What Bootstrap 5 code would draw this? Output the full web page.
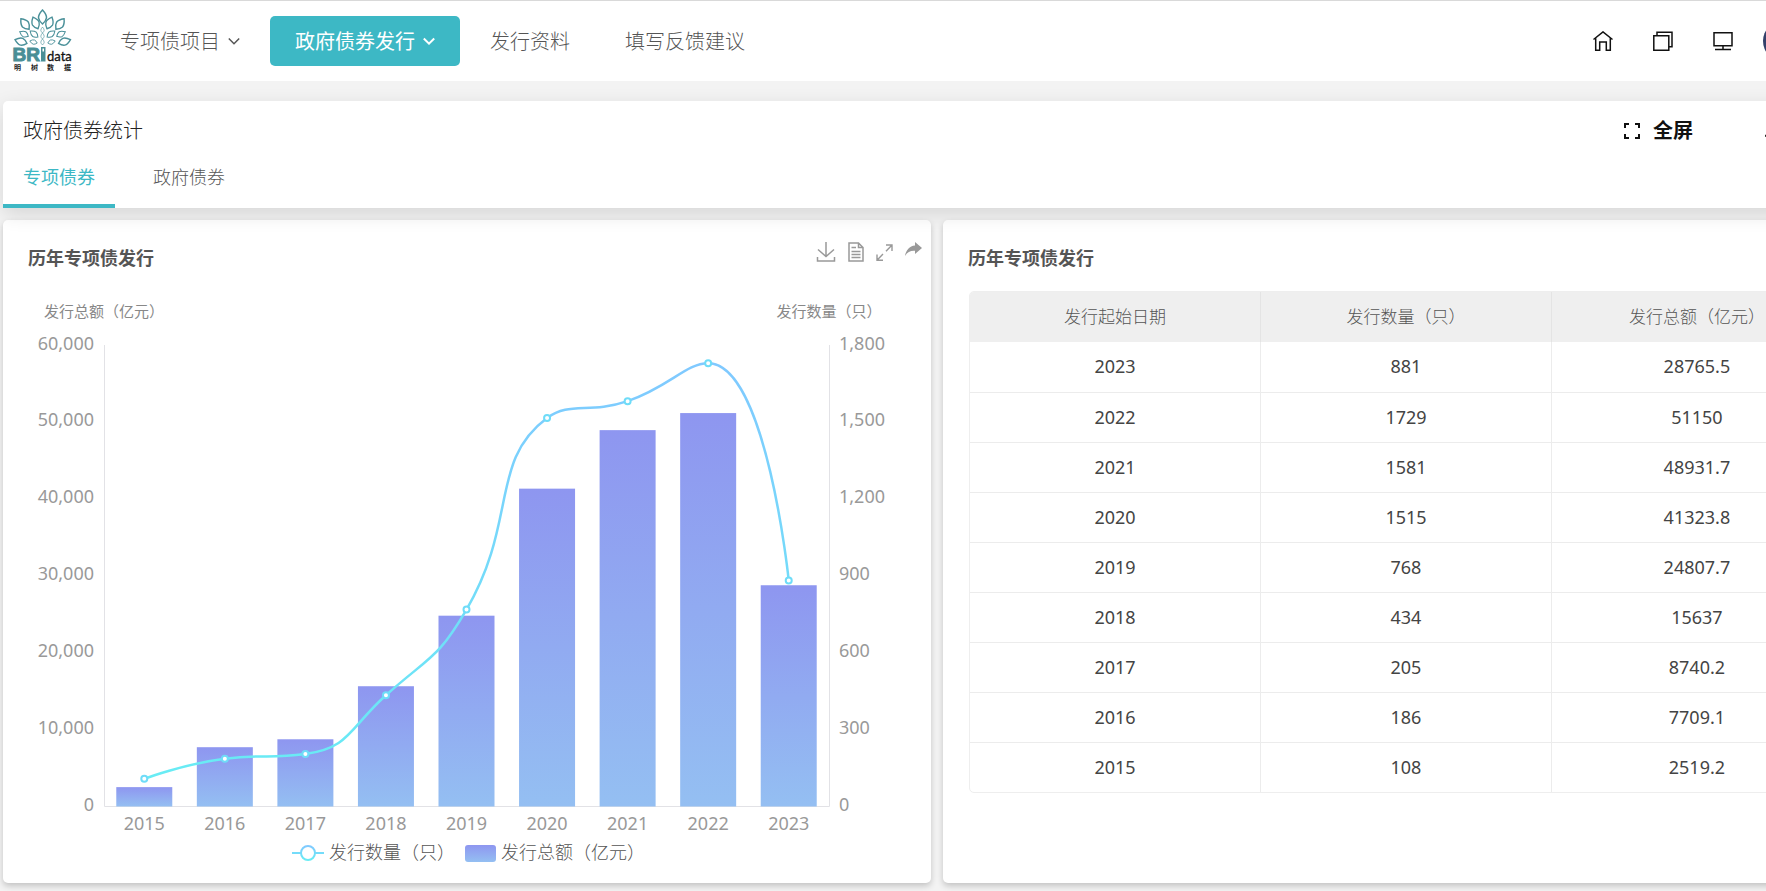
<!DOCTYPE html>
<html lang="zh-CN">
<head>
<meta charset="utf-8">
<meta name="viewport" content="width=device-width, initial-scale=1">
<title>政府债券统计</title>
<link href="https://cdn.jsdelivr.net/npm/bootstrap@5.3.0/dist/css/bootstrap.min.css" rel="stylesheet">
<style>
:root { --teal: #3db8c5; --bleed: 108px; }
body { font-family: "Noto Sans", "Noto Sans CJK SC", sans-serif; font-size: 18px; line-height: 24px; background: #f3f3f3; color: #555; overflow-x: hidden; }
/* the dashboard runs past the right edge of the window */
.shell { width: calc(100% + var(--bleed)); overflow: hidden; min-height: 100vh; }
.topbar { border-top: 1px solid #d9d9d9; height: 81px; padding: 0 71px 0 12px; background: #fff; font-size: 20px; }
.brand-mark { width: 83px; }
.topbar .nav { gap: 5px; }
.topbar .nav-link { font-family: "Noto Sans CJK SC", sans-serif; font-weight: 300; color: #555; height: 50px; padding: 0 25px; border-radius: 5px; gap: 8px; }
.topbar .nav-link.active { background: var(--teal); color: #fff; font-weight: 400; }
.tools { gap: 40px; }
.icon-btn { border: 0; background: none; padding: 0; line-height: 0; color: #111; }
.avatar { width: 40px; height: 40px; border-radius: 50%; background: #33406a; margin-left: -10px; }
.page { padding: 20px 3px 8px; }
.panel { background: #fff; border-radius: 5px; box-shadow: 0 6px 20px rgba(0,0,0,.12); position: relative; z-index: 1; }
.panel-head { height: 55px; padding: 4px 86px 0 20px; color: #222; }
.panel-head h1 { font-size: 20px; font-weight: 300; line-height: 28px; margin: 0; }
.full-btn { font-size: 20px; font-weight: 700; color: #111; gap: 13px; margin-right: 72px; line-height: 28px; }
.tab-row { gap: 18px; height: 52px; }
.tab-row .nav-link { font-weight: 300; color: #555; padding: 9px 20px 0; border-bottom: 4px solid transparent; border-radius: 0; }
.tab-row .nav-link.active { color: var(--teal); border-color: var(--teal); font-weight: 400; }
.boards { margin-top: 12px; gap: 12px; }
.board { flex: 1 1 0; min-width: 0; min-height: 663px; background: #fff; border-radius: 5px; box-shadow: 0 3px 6px rgba(0,0,0,.2); }
.board-head { height: 70px; padding: 0 9px 0 25px; }
.board-head h2 { font-size: 18px; line-height: 24px; font-weight: 700; color: #555; margin: 26px 0 0; }
.board-tools { gap: 12px; padding-top: 22px; }
.board-tools .icon-btn { color: #999; }
.chart { display: block; width: 100%; height: auto; font-size: 18px; fill: #999; }
.chart .axis-name { font-size: 15px; fill: #888; }
.chart .legend-text { fill: #555; font-weight: 300; }
.grid-wrap { margin: 1px 28px 0 26px; border: 1px solid #eee; border-radius: 5px; overflow: hidden; }
.grid-wrap table { margin: 0; table-layout: fixed; text-align: center; --bs-table-color: #444; --bs-table-bg: transparent; border-color: #eee; }
.grid-wrap th, .grid-wrap td { height: 50px; padding: 0 0 1px; vertical-align: middle; border: 0 solid #ececec; }
.grid-wrap th { background: #efefef !important; font-size: 17px; font-weight: 300; color: #555 !important; border-color: #e4e4e4; }
.grid-wrap th + th, .grid-wrap td + td { border-left-width: 1px; }
.grid-wrap tbody tr + tr td { border-top-width: 1px; }
</style>
</head>
<body>
<div class="shell">
  <header class="topbar d-flex align-items-center">
    <a class="brand-mark flex-shrink-0 d-block lh-1" href="#" aria-label="BRIdata 明树数据">
      <svg width="62" height="66" viewBox="12 8 62 66">
        <defs><path id="leaf" d="M0-7Q4.200-2.500 4 .8Q3.500 4 0 7Q-3.500 4-4 .8Q-4.200-2.500 0-7Z"/></defs>
        <g fill="#fff" stroke="#4a9099" stroke-width="1.500">
          <use href="#leaf" transform="translate(42.500 17)"/>
          <use href="#leaf" transform="translate(35.500 23) rotate(-24) scale(.9)"/>
          <use href="#leaf" transform="translate(49.500 23) rotate(24) scale(.9)"/>
          <use href="#leaf" transform="translate(25 24) rotate(-38) scale(.95)"/>
          <use href="#leaf" transform="translate(60 24) rotate(38) scale(.95)"/>
          <use href="#leaf" transform="translate(34 34) rotate(-52) scale(.7)"/>
          <use href="#leaf" transform="translate(51 34) rotate(52) scale(.7)"/>
          <use href="#leaf" transform="translate(24 34) rotate(-62) scale(.7)"/>
          <use href="#leaf" transform="translate(61 34) rotate(62) scale(.7)"/>
          <use href="#leaf" transform="translate(21 41.500) rotate(-72) scale(.9)"/>
          <use href="#leaf" transform="translate(64.500 41.500) rotate(72) scale(.9)"/>
          <use href="#leaf" transform="translate(33.500 42) rotate(-74) scale(.55)"/>
          <use href="#leaf" transform="translate(51.500 42) rotate(74) scale(.55)"/>
          <use href="#leaf" transform="translate(42.500 30) scale(.42)"/>
          <use href="#leaf" transform="translate(42.500 36) scale(.42)"/>
          <use href="#leaf" transform="translate(42.500 42) scale(.42)"/>
        </g>
        <text x="12.500" y="61" font-family="Liberation Sans, sans-serif" font-weight="700" font-size="19" fill="#4a8f96" stroke="#4a8f96" stroke-width="1">BR</text>
        <path fill="#4a8f96" d="M41 47h4.500v14.500H41z"/><path fill="#fff" d="M42.500 48.500h1.500v3h-1.500z"/>
        <text x="47" y="61" font-family="Lato, sans-serif" font-size="13" fill="#111" stroke="#111" stroke-width=".3">data</text>
        <g font-family="Noto Sans CJK SC, sans-serif" font-weight="700" font-size="7" fill="#222"><text x="14" y="70">明</text><text x="31" y="70">树</text><text x="47" y="70">数</text><text x="64" y="70">据</text></g>
      </svg>
    </a>
    <nav class="nav flex-nowrap">
      <a class="nav-link d-flex align-items-center" href="#">专项债项目<svg width="12" height="12" viewBox="0 0 12 12" fill="none" stroke="currentColor" stroke-width="1.500"><path d="M.8 3.500 6 8.700l5.200-5.200"/></svg></a>
      <a class="nav-link active d-flex align-items-center" href="#">政府债券发行<svg width="12" height="12" viewBox="0 0 12 12" fill="none" stroke="currentColor" stroke-width="2"><path d="M.8 3.500 6 8.700l5.200-5.200"/></svg></a>
      <a class="nav-link d-flex align-items-center" href="#">发行资料</a>
      <a class="nav-link d-flex align-items-center" href="#">填写反馈建议</a>
    </nav>
    <div class="tools d-flex align-items-center ms-auto">
      <button class="icon-btn" aria-label="首页"><svg width="20" height="20" viewBox="0 0 20 20" fill="none" stroke="currentColor" stroke-width="1.500"><path d="M.5 8.500 10 .9l9.500 7.600M2.700 7v12.200h4V11h6.600v8.200h4V7"/></svg></button>
      <button class="icon-btn" aria-label="窗口"><svg width="20" height="20" viewBox="0 0 20 20" fill="none" stroke="currentColor" stroke-width="1.500"><path d="M.8 4.700h15v14.500h-15zM4 4.500V1.200h15v14.500h-3"/></svg></button>
      <button class="icon-btn" aria-label="屏幕"><svg width="20" height="20" viewBox="0 0 20 20" fill="none" stroke="currentColor" stroke-width="1.500"><path d="M1 1.700h18v13H1zM10 14.700v3.500M2 18.500h16"/></svg></button>
      <button class="icon-btn avatar" aria-label="账户"></button>
    </div>
  </header>

  <main class="page">
    <section class="panel">
      <div class="panel-head d-flex align-items-center">
        <h1 class="me-auto">政府债券统计</h1>
        <button class="icon-btn full-btn d-flex align-items-center"><svg width="16" height="16" viewBox="0 0 16 16" fill="none" stroke="currentColor" stroke-width="2"><path d="M1 5V1h4M11 1h4v4M15 11v4h-4M5 15H1v-4"/></svg>全屏</button>
        <button class="icon-btn" aria-label="提醒"><svg width="20" height="20" viewBox="0 0 20 20" fill="none" stroke="currentColor" stroke-width="1.500"><path d="M.5 15h19L17 12V8a7 7 0 0 0-14 0v4zM8 18h4"/></svg></button>
      </div>
      <nav class="tab-row nav">
        <a class="nav-link active d-flex align-items-start" href="#">专项债券</a>
        <a class="nav-link d-flex align-items-start" href="#">政府债券</a>
      </nav>
    </section>

    <div class="boards d-flex">
      <section class="board">
        <div class="board-head d-flex align-items-start justify-content-between">
          <h2>历年专项债发行</h2>
          <div class="board-tools d-flex align-items-start">
            <button class="icon-btn" aria-label="下载"><svg width="20" height="20" viewBox="0 0 20 20" fill="none" stroke="currentColor" stroke-width="1.500"><path d="M10 0v14.500M2 7.500l8 7 8-7M1.500 15v4h17v-4"/></svg></button>
            <button class="icon-btn" aria-label="数据"><svg width="16" height="20" viewBox="0 0 16 20" fill="none" stroke="currentColor" stroke-width="1.500"><path d="M1 1h9.500L15 5.500V19H1zM10.500 1v4.500H15M3.500 5.500H8M3.500 9.500h9M3.500 12.500h9M3.500 15.500h9"/></svg></button>
            <button class="icon-btn" aria-label="放大"><svg width="17" height="20" viewBox="0 0 17 20" fill="none" stroke="currentColor" stroke-width="1.400"><path d="M10 3h6v6M16 3l-6 6.200M7 12l-6 6.200M1 12.500v5.800h6"/></svg></button>
            <button class="icon-btn" aria-label="分享"><svg width="17" height="14" viewBox="0 0 17 14" fill="currentColor"><path d="M10 0l7 6-7 6V8.800C5.500 8.500 2.500 10 0 14 1 8 4.500 4 10 3.500z"/></svg></button>
          </div>
        </div>
        <svg class="chart" id="chart" viewBox="0 0 928 585" role="img" aria-label="历年专项债发行">
          <defs>
            <linearGradient id="barFill" x1="0" y1="0" x2="0" y2="1"><stop offset="0" stop-color="#8e96f0"/><stop offset="1" stop-color="#94bff2"/></linearGradient>
            <linearGradient id="lineFill" x1="0" y1="0" x2="0" y2="1"><stop offset="0" stop-color="#80c9ff"/><stop offset="1" stop-color="#68ecf4"/></linearGradient>
          </defs>
          <text class="axis-name" x="101" y="27" text-anchor="middle">发行总额（亿元）</text>
          <text class="axis-name" x="826" y="27" text-anchor="middle">发行数量（只）</text>
          <g id="plot"></g>
          <path d="M289 563h32" stroke="#74dcfa" stroke-width="2"/>
          <circle cx="305" cy="563" r="7" fill="#fff" stroke="url(#lineFill)" stroke-width="2"/>
          <text class="legend-text" x="326" y="569">发行数量（只）</text>
          <rect x="462" y="555" width="31" height="17" rx="3" fill="url(#barFill)"/>
          <text class="legend-text" x="498" y="569">发行总额（亿元）</text>
        </svg>
      </section>

      <section class="board">
        <div class="board-head d-flex align-items-start"><h2>历年专项债发行</h2></div>
        <div class="grid-wrap">
          <table class="table">
            <thead><tr><th scope="col">发行起始日期</th><th scope="col">发行数量（只）</th><th scope="col">发行总额（亿元）</th></tr></thead>
            <tbody>
              <tr><td>2023</td><td>881</td><td>28765.5</td></tr>
              <tr><td>2022</td><td>1729</td><td>51150</td></tr>
              <tr><td>2021</td><td>1581</td><td>48931.7</td></tr>
              <tr><td>2020</td><td>1515</td><td>41323.8</td></tr>
              <tr><td>2019</td><td>768</td><td>24807.7</td></tr>
              <tr><td>2018</td><td>434</td><td>15637</td></tr>
              <tr><td>2017</td><td>205</td><td>8740.2</td></tr>
              <tr><td>2016</td><td>186</td><td>7709.1</td></tr>
              <tr><td>2015</td><td>108</td><td>2519.2</td></tr>
            </tbody>
          </table>
        </div>
      </section>
    </div>
  </main>
</div>
<script src="https://cdn.jsdelivr.net/npm/bootstrap@5.3.0/dist/js/bootstrap.bundle.min.js"></script>
<script>
// Reads the table and draws bars (amount) and a smooth line (count), oldest year first.
const rows = [...document.querySelectorAll('tbody tr')].map(r => [...r.cells].map(c => +c.textContent)).reverse();
const L = 101.5, R = 826.5, T = 55, B = 516.5, band = (R - L) / rows.length, H = B - T;
let out = `<path d="M${L} ${T}V${B}H${R}V${T}" fill="none" stroke="#e2e2e6"/>`;
for (let i = 0; i <= 6; i++) {
  const y = B - H * i / 6 + 4.5;
  out += `<text x="91" y="${y}" text-anchor="end">${(i * 10000).toLocaleString('en-US')}</text>`;
  out += `<text x="836" y="${y}">${(i * 300).toLocaleString('en-US')}</text>`;
}
const pts = rows.map(([year, count, sum], i) => {
  const x = L + band * (i + .5) - .5, h = H * sum / 60000;
  out += `<rect x="${x - 28}" y="${B - h}" width="56" height="${h}" fill="url(#barFill)"/>`;
  out += `<text x="${x}" y="540" text-anchor="middle">${year}</text>`;
  return [x, B - H * count / 1800];
});
const clamp = (v, a, b) => Math.max(Math.min(v, Math.max(a, b)), Math.min(a, b));
let d = `M${pts[0]}`, c0 = pts[0];
for (let i = 1; i < pts.length; i++) {
  const p = pts[i - 1], q = pts[i], n = pts[i + 1];
  let c1 = q, next = q;
  if (n) {
    const a = Math.hypot(q[0] - p[0], q[1] - p[1]), b = Math.hypot(n[0] - q[0], n[1] - q[1]);
    next = [0, 1].map(k => clamp(q[k] + (n[k] - p[k]) * .5 * b / (a + b), n[k], q[k]));
    c1 = [0, 1].map(k => clamp(q[k] - (next[k] - q[k]) * a / b, p[k], q[k]));
    next = [0, 1].map(k => q[k] + (q[k] - c1[k]) * b / a);
  }
  d += `C${c0} ${c1} ${q}`;
  c0 = next;
}
out += `<path d="${d}" fill="none" stroke="url(#lineFill)" stroke-width="2.5"/>`;
pts.forEach(([x, y]) => out += `<circle cx="${x}" cy="${y}" r="3" fill="#fff" stroke="#6fdcf8" stroke-width="2"/>`);
document.getElementById('plot').innerHTML = out;
</script>
</body>
</html>
